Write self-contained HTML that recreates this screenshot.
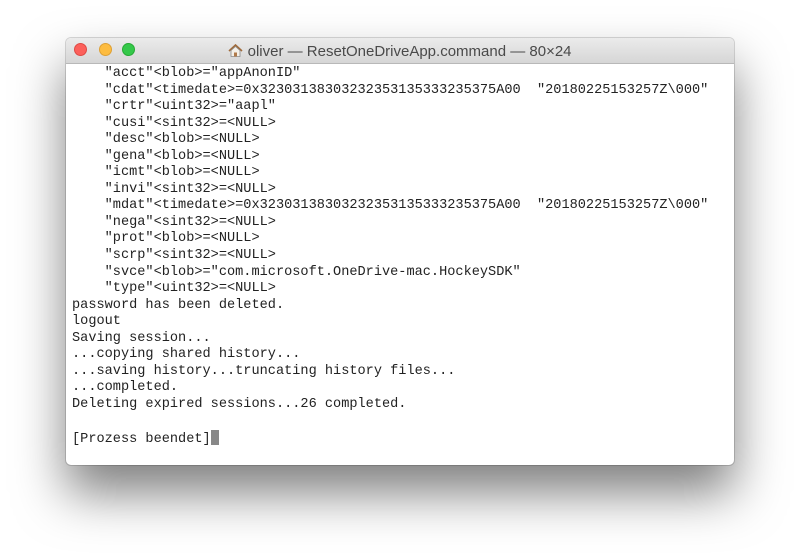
<!DOCTYPE html>
<html><head><style>
body{margin:0;width:800px;height:560px;background:#fff;position:relative;overflow:hidden;font-family:"Liberation Sans",sans-serif}
.win{position:absolute;left:66px;top:38px;width:668px;height:427px;background:#fff;border-radius:5px;box-shadow:0 28px 50px rgba(0,0,0,.5),0 0 0 1px rgba(0,0,0,.15);overflow:hidden}
.tb{height:25px;background:linear-gradient(#ebebeb,#d6d6d6);border-bottom:1px solid #b8b8b8;position:relative}
.dot{position:absolute;top:5px;width:13px;height:13px;border-radius:50%;box-sizing:border-box}
.title{position:absolute;left:0;right:0;top:5px;text-align:center;font-size:15px;color:#4a4a4a}
pre{margin:0;position:absolute;left:6px;top:28px;font-family:"Liberation Mono",monospace;font-size:13.6px;line-height:16.55px;color:#222}
.cur{display:inline-block;width:8px;height:15px;background:#888;vertical-align:-3px}
</style></head><body>
<div class="win">
<div class="tb">
<div class="dot" style="left:8px;background:#fc605b;border:1px solid #de4a44"></div>
<div class="dot" style="left:33px;background:#fdbc40;border:1px solid #dea034"></div>
<div class="dot" style="left:56px;background:#34c84a;border:1px solid #27aa35"></div>
<div class="title"><svg width="15" height="13" viewBox="0 0 15 13" style="vertical-align:-1px"><path d="M1 7L7.5 1L14 7" fill="none" stroke="#a06a3a" stroke-width="1.6"/><path d="M3 6.5V12.5H12V6.5L7.5 2.5Z" fill="#f4f0e8" stroke="#8a8a8a" stroke-width=".8"/><rect x="6" y="8.5" width="3" height="4" fill="#b07a4a"/></svg> oliver — ResetOneDriveApp.command — 80×24</div>
</div>
<pre>    "acct"&lt;blob&gt;="appAnonID"
    "cdat"&lt;timedate&gt;=0x32303138303232353135333235375A00  "20180225153257Z\000"
    "crtr"&lt;uint32&gt;="aapl"
    "cusi"&lt;sint32&gt;=&lt;NULL&gt;
    "desc"&lt;blob&gt;=&lt;NULL&gt;
    "gena"&lt;blob&gt;=&lt;NULL&gt;
    "icmt"&lt;blob&gt;=&lt;NULL&gt;
    "invi"&lt;sint32&gt;=&lt;NULL&gt;
    "mdat"&lt;timedate&gt;=0x32303138303232353135333235375A00  "20180225153257Z\000"
    "nega"&lt;sint32&gt;=&lt;NULL&gt;
    "prot"&lt;blob&gt;=&lt;NULL&gt;
    "scrp"&lt;sint32&gt;=&lt;NULL&gt;
    "svce"&lt;blob&gt;="com.microsoft.OneDrive-mac.HockeySDK"
    "type"&lt;uint32&gt;=&lt;NULL&gt;
password has been deleted.
logout
Saving session...
...copying shared history...
...saving history...truncating history files...
...completed.
Deleting expired sessions...26 completed.

[Prozess beendet]<span class="cur"></span></pre>
</div>
</body></html>
